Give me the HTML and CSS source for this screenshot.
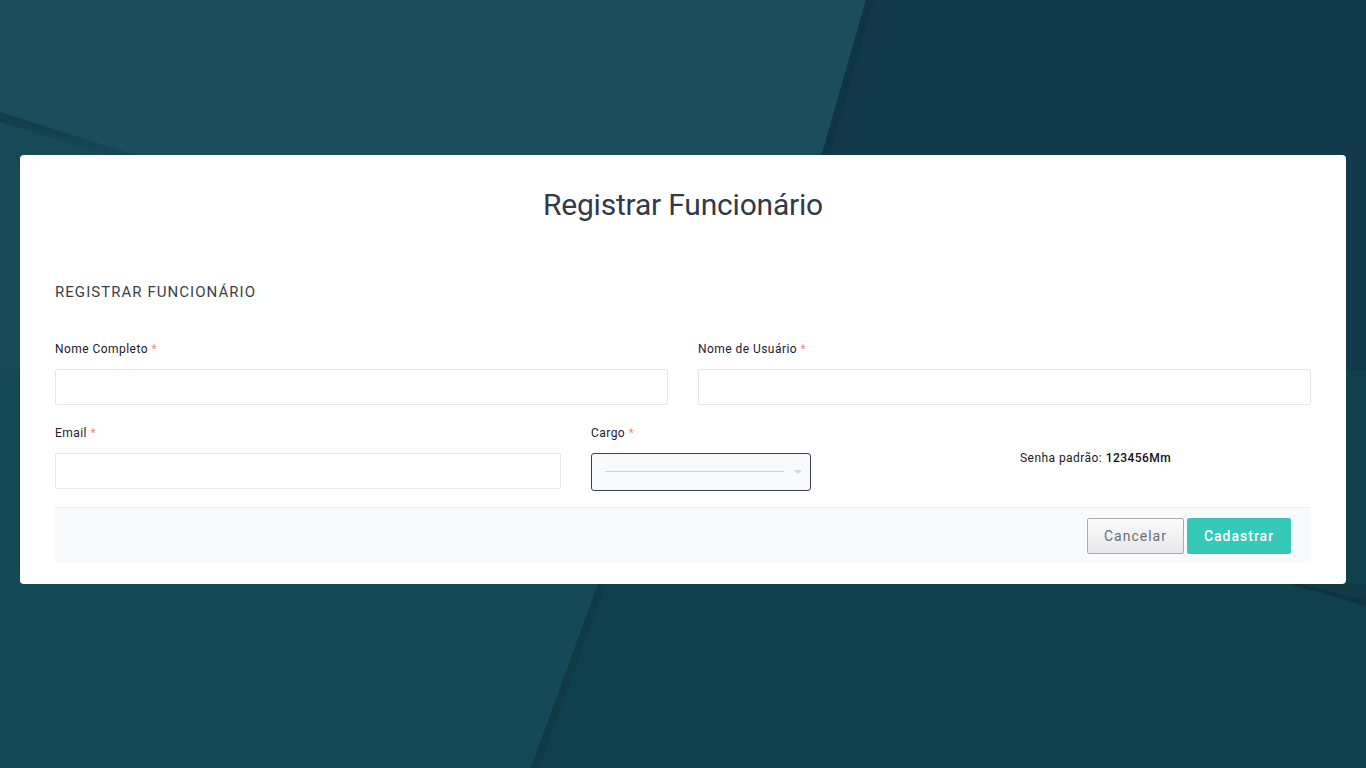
FILE: index.html
```html
<!DOCTYPE html>
<html lang="pt-BR">
<head>
<meta charset="utf-8">
<title>Registrar Funcionário</title>
<link rel="stylesheet" href="styles.css">
</head>
<body>
<svg class="bg" width="1366" height="768" viewBox="0 0 1366 768" preserveAspectRatio="none">
  <defs>
    <linearGradient id="shL" x1="0" y1="0" x2="0" y2="1">
      <stop offset="0" stop-color="#103744" stop-opacity="0.7"/>
      <stop offset="1" stop-color="#103744" stop-opacity="0"/>
    </linearGradient>
  </defs>
  <rect x="0" y="0" width="1366" height="370" fill="#11394a"/>
  <rect x="0" y="370" width="1366" height="398" fill="#11404d"/>
  <polygon points="0,0 866,0 760,370 0,370" fill="#1b4d5c"/>
  <polygon points="0,112 135,155 135,370 0,370" fill="#184956"/>
  <polygon points="0,112 135,155 135,163 0,122" fill="url(#shL)"/>
  <polygon points="866,0 874,0 768,370 760,370" fill="#0f3443" opacity="0.6"/>
  <polygon points="0,370 676,370 531,768 0,768" fill="#164957"/>
  <polygon points="598,584 606,584 539,768 531,768" fill="#0f3743" opacity="0.6"/>
  <polygon points="1290,584 1366,584 1366,606" fill="#0f3440"/>
  <polygon points="1300,584 1366,584 1366,600" fill="#123a47"/>
</svg>

<main class="card">
  <h1 class="title">Registrar Funcionário</h1>
  <h2 class="section">REGISTRAR FUNCIONÁRIO</h2>

  <div class="row">
    <div class="field col-6">
      <label class="label">Nome Completo <span class="req">*</span></label>
      <input class="input" type="text">
    </div>
    <div class="field col-6">
      <label class="label">Nome de Usuário <span class="req">*</span></label>
      <input class="input" type="text">
    </div>
  </div>

  <div class="row row2">
    <div class="field col-5">
      <label class="label">Email <span class="req">*</span></label>
      <input class="input" type="text">
    </div>
    <div class="field col-4">
      <label class="label">Cargo <span class="req">*</span></label>
      <div class="select">
        <span class="placeholder"></span>
        <span class="caret"></span>
      </div>
    </div>
    <div class="field col-3 senha">
      <span class="senha-label">Senha padrão: </span><strong class="senha-val">123456Mm</strong>
    </div>
  </div>

  <div class="footer">
    <button class="btn btn-cancel">Cancelar</button>
    <button class="btn btn-save">Cadastrar</button>
  </div>
</main>
</body>
</html>
```

FILE: styles.css
```css
* { box-sizing: border-box; }
html, body {
  margin: 0;
  padding: 0;
  width: 1366px;
  height: 768px;
  overflow: hidden;
  background: #11394a;
  font-family: Roboto, "Liberation Sans", sans-serif;
}
body { position: relative; padding-top: 155px; }
.bg {
  position: absolute;
  left: 0;
  top: 0;
  z-index: 0;
}
.card {
  position: relative;
  z-index: 1;
  margin: 0 20px;
  height: 429px;
  background: #fff;
  border-radius: 4px;
  padding: 28px 35px 0 35px;
}
.title {
  margin: 0;
  text-align: center;
  font-family: Roboto, "Liberation Sans", sans-serif;
  font-weight: 400;
  font-size: 30px;
  letter-spacing: -0.2px;
  line-height: 44px;
  color: #333a48;
}
.section {
  margin: 56px 0 0 0;
  font-size: 15px;
  font-weight: 400;
  letter-spacing: 1.05px;
  line-height: 18px;
  color: #3b3f4a;
}
.row {
  display: flex;
  gap: 30px;
  margin-top: 41px;
}
.row2 { margin-top: 21px; }
.col-6 { flex: 0 0 613px; }
.col-5 { flex: 0 0 506px; }
.col-4 { flex: 0 0 399px; }
.col-3 { flex: 1 1 auto; }
.field { display: flex; flex-direction: column; }
.label {
  font-size: 12px;
  line-height: 14px;
  letter-spacing: 0.45px;
  color: #1c1b2b;
  margin-bottom: 13px;
}
.req { color: #f08a8a; }
.input {
  height: 36px;
  border: 1px solid #e6e7e9;
  border-radius: 2px;
  background: #fff;
  outline: none;
  font-family: inherit;
}
.select {
  position: relative;
  width: 220px;
  height: 38px;
  border: 1px solid #3b3f55;
  border-radius: 3px;
  background: #f9fafc;
}
.placeholder {
  position: absolute;
  left: 13px;
  top: 17px;
  width: 179px;
  height: 1px;
  background: #cfd3da;
}
.caret {
  position: absolute;
  left: 202px;
  top: 16px;
  width: 0;
  height: 0;
  border-left: 4px solid transparent;
  border-right: 4px solid transparent;
  border-top: 4px solid #d4d7dc;
}
.senha {
  display: block;
  padding-top: 25px;
  font-size: 12px;
  letter-spacing: 0.45px;
  color: #1c1b2b;
  line-height: 14px;
}
.senha-val { font-weight: 500; color: #111; }
.footer {
  margin-top: 16px;
  height: 56px;
  background: #f9fafb;
  border-top: 1px solid #eef0f2;
  display: flex;
  justify-content: flex-end;
  align-items: center;
  gap: 3px;
  padding-right: 20px;
}
.btn {
  height: 36px;
  font-family: inherit;
  font-size: 14px;
  letter-spacing: 1px;
  border-radius: 2px;
  cursor: pointer;
}
.btn-cancel {
  width: 97px;
  border: 1px solid #a9abaf;
  background: linear-gradient(#fbfbfc, #e7e8ea);
  color: #6b6f7c;
}
.btn-save {
  width: 104px;
  border: 1px solid #36c9b8;
  background: #36c9b8;
  color: #fff;
  font-weight: 500;
}
```
